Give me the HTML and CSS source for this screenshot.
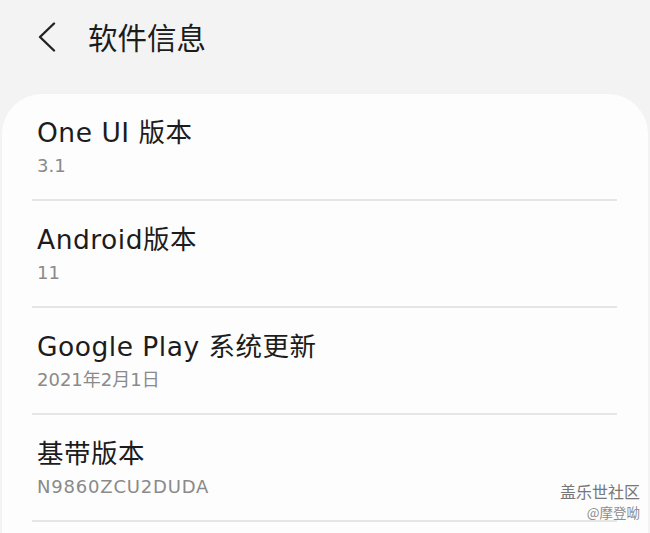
FILE: index.html
```html
<!DOCTYPE html>
<html lang="zh">
<head>
<meta charset="utf-8">
<link rel="stylesheet" href="styles.css">
</head>
<body>
<div class="screen">
  <header class="topbar">
    <svg class="back" width="20" height="30" viewBox="0 0 20 30"><polyline points="17,1.5 3,15 17,28.5" fill="none" stroke="#222" stroke-width="2.4" stroke-linecap="round" stroke-linejoin="round"/></svg>
    <h1 class="title">软件信息</h1>
  </header>
  <main class="card">
    <div class="row">
      <div class="row-title">One UI 版本</div>
      <div class="row-sub">3.1</div>
    </div>
    <div class="row">
      <div class="row-title">Android版本</div>
      <div class="row-sub">11</div>
    </div>
    <div class="row">
      <div class="row-title">Google Play 系统更新</div>
      <div class="row-sub">2021年2月1日</div>
    </div>
    <div class="row">
      <div class="row-title">基带版本</div>
      <div class="row-sub code">N9860ZCU2DUDA</div>
    </div>
  </main>
  <div class="watermark">
    <div class="wm-main">盖乐世社区</div>
    <div class="wm-sub">@摩登呦</div>
  </div>
</div>
</body>
</html>
```
FILE: styles.css
```css
html, body {
  margin: 0;
  padding: 0;
  background: #f3f3f3;
}
body {
  font-family: "Noto Sans CJK SC", "Noto Sans", sans-serif;
  color: #1c1c1c;
}
.screen {
  position: relative;
  width: 650px;
  height: 533px;
  overflow: hidden;
}
.topbar {
  height: 94px;
  display: flex;
  align-items: flex-start;
  padding-top: 22px;
  padding-left: 37px;
  box-sizing: border-box;
}
.back {
  display: block;
}
.title {
  margin: -1px 0 0 31px;
  font-size: 29.5px;
  font-weight: 400;
  line-height: 30px;
  color: #1c1c1c;
}
.card {
  margin: 0 2px;
  background: #fdfdfd;
  border-radius: 40px 40px 0 0;
  padding: 0 31px 0 30px;
  min-height: 480px;
}
.row {
  padding: 22px 0 21px 5px;
  border-bottom: 2px solid #e6e6e6;
}
.row-title {
  font-family: "DejaVu Sans", "Noto Sans CJK SC", sans-serif;
  font-size: 26.5px;
  line-height: 34px;
  letter-spacing: 0.5px;
  color: #1c1c1c;
}
.row-sub {
  margin-top: 4px;
  font-family: "DejaVu Sans", "Noto Sans CJK SC", sans-serif;
  font-size: 18px;
  line-height: 24px;
  color: #8a8a8a;
}
.row-sub.code {
  letter-spacing: 0.8px;
}
.watermark {
  position: absolute;
  right: 10px;
  bottom: 11px;
  text-align: right;
}
.wm-main {
  font-size: 16px;
  line-height: 22px;
  color: #777;
}
.wm-sub {
  font-size: 13.5px;
  line-height: 20px;
  color: #8c8c8c;
}
```
